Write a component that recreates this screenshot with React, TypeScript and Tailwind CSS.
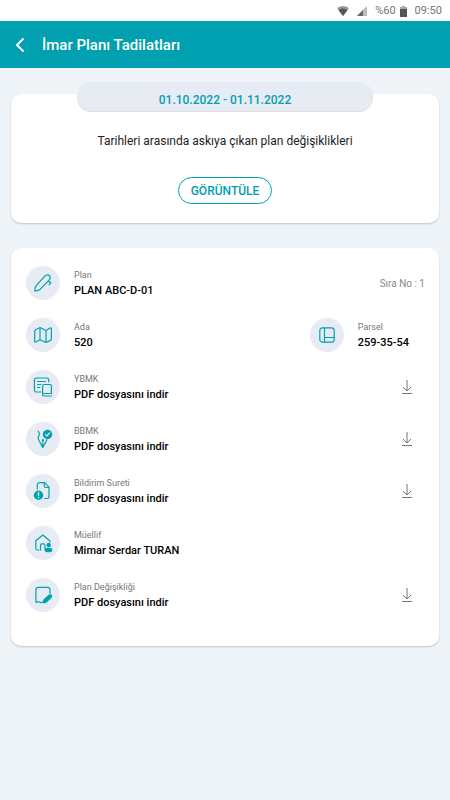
import type { ReactNode } from "react";

const iconProps = {
  width: 20,
  height: 20,
  viewBox: "0 0 20 20",
  fill: "none",
  stroke: "currentColor",
  strokeWidth: 1.2,
  strokeLinecap: "round" as const,
  strokeLinejoin: "round" as const,
  "aria-hidden": true,
};

const PenIcon = () => (
  <svg {...iconProps}>
    <path d="M1.600 17.900C1.800 15.800 2.200 13.800 3.200 12.600L11.800 3.200C13.200 1.800 15.200 1.600 16.400 2.700C17.600 3.900 17.300 5.700 16 7.200L7.300 16.200C6 17.400 3.800 17.900 1.600 17.900Z" />
    <path d="M14.800 8.500l2.200.300c.8.300.9 1 .4 1.500l-1.300 1.400" />
  </svg>
);

const MapIcon = () => (
  <svg {...iconProps}>
    <path d="M1.700 6.200c0-.7.300-1.200.9-1.500L7 2.500v12.200l-4 2.300c-.8.400-1.300 0-1.300-.800zM7 2.500l6 3v12L7 14.700M13 5.500l4.100-2.400c.8-.4 1.300 0 1.300.8v10.200c0 .6-.3 1-.8 1.300L13 17.500" />
  </svg>
);

const PagesIcon = () => (
  <svg {...iconProps}>
    <path d="M8 15H3.700a2.300 2.300 0 0 1-2.300-2.300V3.300A2.300 2.300 0 0 1 3.700 1h9.800a2.300 2.300 0 0 1 2.300 2.300V5" />
    <path d="M4.500 4.500h8M4.500 7.500H8M4.500 10.500h2.300M9.600 16.500h8.800v-7.500A1.500 1.500 0 0 0 16.900 7.500H11.100A1.500 1.500 0 0 0 9.600 9V17.500a1.500 1.500 0 0 0 1.500 1.500H18.400" />
  </svg>
);

const NibIcon = () => (
  <svg {...iconProps}>
    <path d="M5.200 2c.2 1.500 1.900 2.200 1.300 3.600C5.900 6.700 5 7.300 5.200 9c.2 1.800 1 3.200 1.900 4.600L9.800 18.400l2.700-4.800c.7-1.100 1.200-1.900 1.500-2.900M9.800 17.500v-6" />
    <circle cx="9.800" cy="11.200" r="1.100" fill="currentColor" stroke="none" />
    <circle cx="14.500" cy="5.500" r="4.700" fill="currentColor" stroke="none" />
    <path d="m12.500 5.700 1.300 1.300 2.700-3" stroke="#e7ebf3" />
  </svg>
);

const NoticeIcon = () => (
  <svg {...iconProps}>
    <path d="M4.300 8V4A2.300 2.300 0 0 1 6.600 1.700H11.500L16 6.200v9.500A1.800 1.800 0 0 1 14.200 17.500H11.500M11.200 2V5a1.500 1.500 0 0 0 1.500 1.500H15.800" />
    <circle cx="5.500" cy="14.300" r="4.700" fill="currentColor" stroke="none" />
    <path d="M5.500 11.700v2.900M5.500 16.700v.1" stroke="#e7ebf3" strokeWidth="1.400" />
  </svg>
);

const HouseIcon = () => (
  <svg {...iconProps}>
    <path d="M6 17H4.600A1.800 1.800 0 0 1 2.800 15.200V7.800L9.800 2l7 5.800V9M7.500 17v-4.500A1.600 1.600 0 0 1 9.100 10.900h1.300A1.600 1.600 0 0 1 12 12.500V16" />
    <circle cx="15.700" cy="12" r="2.200" fill="currentColor" stroke="none" />
    <ellipse cx="15.500" cy="17" rx="3.900" ry="2.300" fill="currentColor" stroke="none" />
  </svg>
);

const EditIcon = () => (
  <svg {...iconProps}>
    <path d="M17 8.500V4.600A2.300 2.300 0 0 0 14.700 2.300H5.200A2.300 2.300 0 0 0 2.900 4.600V16.500c0 1 .8 1.200 1.500.5s1.600-.6 2.300.1 1.600.700 2.300.1" />
    <path d="M15.700 9.800c.9-.8 2.200-.8 3 0 .8.900.7 2.100-.2 3l-4.200 4.100c-.9.900-3.200 1.500-4.900 1.300 0-1.500.8-3.500 1.800-4.400z" fill="currentColor" stroke="none" />
  </svg>
);

const ParcelIcon = () => (
  <svg {...iconProps}>
    <rect x="2.800" y="2.800" width="14.400" height="14.400" rx="2.800" />
    <path d="M7.500 3v14M7.500 12.500H17" />
  </svg>
);

const DownloadIcon = () => (
  <svg width="12" height="16" viewBox="0 0 12 16" fill="none" stroke="currentColor" aria-hidden="true">
    <path d="M6 1v11M2 8l4 4 4-4" />
    <path d="M1 14.500h10" />
  </svg>
);

function Field({ icon, label, value }: { icon: ReactNode; label: string; value: string }) {
  return (
    <div className="flex items-center gap-3.5">
      <span className="flex size-[34px] shrink-0 items-center justify-center rounded-full bg-[#e7ebf3] text-[#00a2b1]">
        {icon}
      </span>
      <div className="whitespace-nowrap">
        <p className="text-[9px] leading-4 text-[#777]">{label}</p>
        <p className="text-[11px] leading-4 font-medium text-black">{value}</p>
      </div>
    </div>
  );
}

const documents = [
  { label: "YBMK", value: "PDF dosyasını indir", icon: <PagesIcon />, file: true },
  { label: "BBMK", value: "PDF dosyasını indir", icon: <NibIcon />, file: true },
  { label: "Bildirim Sureti", value: "PDF dosyasını indir", icon: <NoticeIcon />, file: true },
  { label: "Müellif", value: "Mimar Serdar TURAN", icon: <HouseIcon />, file: false },
  { label: "Plan Değişikliği", value: "PDF dosyasını indir", icon: <EditIcon />, file: true },
];

export default function App() {
  return (
    <div className="min-h-screen bg-[#eef4f7] font-[Roboto,sans-serif]">
      <div className="flex h-[21px] items-center justify-end bg-white pt-px pr-2 text-[11px] text-[#757575]">
        <svg className="mr-2" width="12" height="10" viewBox="0 0 12 10" aria-hidden="true">
          <path d="M0 2Q6-2 12 2L6 10Z" fill="#999" />
          <path d="M1.500 4Q6 1 10.500 4L6 10Z" fill="#555" />
        </svg>
        <svg className="mr-2" width="10" height="10" viewBox="0 0 10 10" aria-hidden="true">
          <path d="M10 0v10H0z" fill="#bbb" />
          <path d="M6 4v6H0z" fill="#666" />
        </svg>
        <span>%60</span>
        <svg className="mr-2 ml-1" width="7" height="11" viewBox="0 0 7 11" aria-hidden="true">
          <path d="M2 0h3v1h2v10H0V1h2z" fill="#aaa" />
          <path d="M0 3h7v8H0z" fill="#555" />
        </svg>
        <span>09:50</span>
      </div>

      <header className="flex h-[47px] items-center gap-3 bg-[#00a0b0] pl-3.5 text-white">
        <button type="button" aria-label="Geri" className="flex w-4 justify-start">
          <svg width="12" height="16" viewBox="0 0 12 16" fill="none" stroke="currentColor" strokeWidth="2" aria-hidden="true">
            <path d="M9.500 1.500 3 8l6.500 6.500" />
          </svg>
        </button>
        <h1 className="pt-0.5 text-[15px] font-medium">İmar Planı Tadilatları</h1>
      </header>

      <main className="px-[11px] pt-3.5">
        <section className="flex flex-col items-center rounded-[10px] mt-3 bg-white pb-[19px] shadow-[0_1px_2px_rgba(0,0,0,0.2)]">
          <h2 className="mx-[66px] -mt-3 flex h-[29px] items-center justify-center self-stretch rounded-full bg-[#e7ebf3] pt-1.5 text-[12px] font-medium text-[#00a0b0] shadow-[0_1px_1px_rgba(0,0,0,0.15)]">
            01.10.2022 - 01.11.2022
          </h2>
          <p className="mt-5 text-[12px] leading-5 text-[#222]">Tarihleri arasında askıya çıkan plan değişiklikleri</p>
          <button
            type="button"
            className="mt-[26px] h-[27px] rounded-full border border-[#00a0b0] px-3 text-[12px] font-medium text-[#00a0b0]"
          >
            GÖRÜNTÜLE
          </button>
        </section>

        <section className="mt-[25px] flex flex-col gap-[18px] rounded-[10px] bg-white pt-[18px] pr-3.5 pb-[34px] pl-[15px] shadow-[0_1px_2px_rgba(0,0,0,0.2)]">
          <div className="flex items-center justify-between">
            <Field icon={<PenIcon />} label="Plan" value="PLAN ABC-D-01" />
            <span className="text-[10px] text-[#888]">Sıra No : 1</span>
          </div>
          <div className="flex items-center justify-between pr-4">
            <Field icon={<MapIcon />} label="Ada" value="520" />
            <Field icon={<ParcelIcon />} label="Parsel" value="259-35-54" />
          </div>
          {documents.map((item) => (
            <div key={item.label} className="flex items-center justify-between pr-3">
              <Field icon={item.icon} label={item.label} value={item.value} />
              {item.file && (
                <button type="button" aria-label={`${item.label} indir`} className="text-[#777]">
                  <DownloadIcon />
                </button>
              )}
            </div>
          ))}
        </section>
      </main>
    </div>
  );
}
